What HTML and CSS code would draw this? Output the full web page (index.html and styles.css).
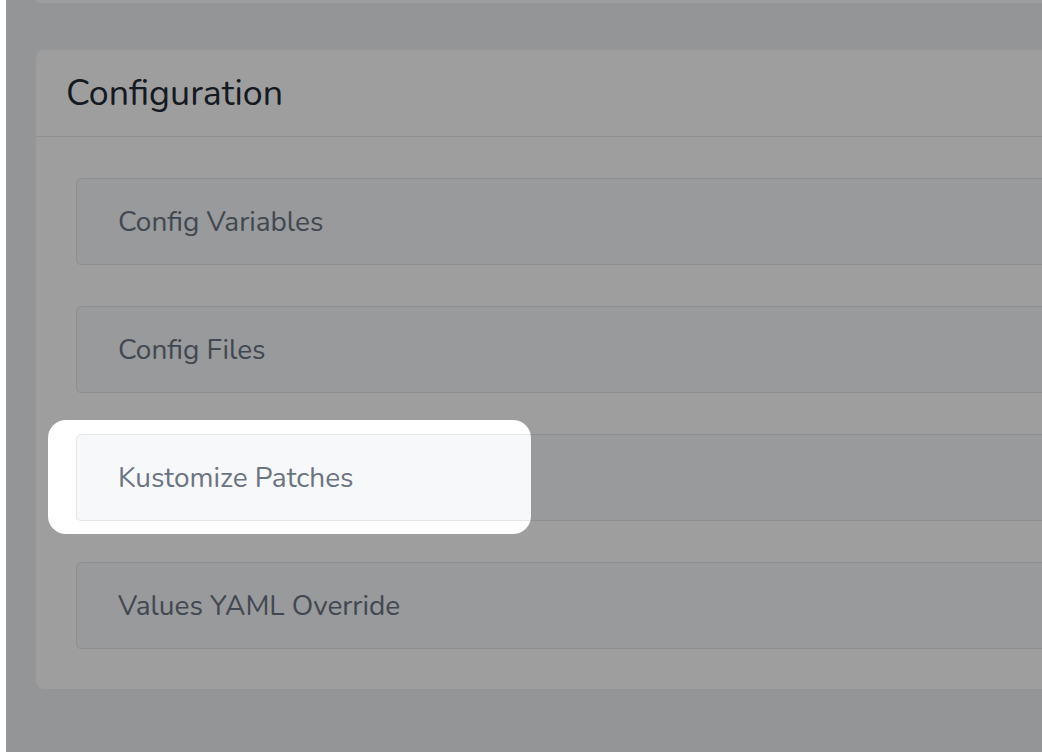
FILE: index.html
```html
<!DOCTYPE html>
<html lang="en">
<head>
<meta charset="utf-8">
<title>Configuration</title>
<link rel="stylesheet" href="styles.css">
</head>
<body>
<div class="app">
  <div class="prev-card"></div>
  <section class="card">
    <header class="card-header">
      <h2 class="card-title">Configuration</h2>
    </header>
    <div class="card-body">
      <div class="item"><span class="item-label">Config Variables</span></div>
      <div class="item"><span class="item-label">Config Files</span></div>
      <div class="item item-focus">
        <span class="item-label">Kustomize Patches</span>
        <div class="spotlight"></div>
      </div>
      <div class="item"><span class="item-label">Values YAML Override</span></div>
    </div>
  </section>
</div>
</body>
</html>
```
FILE: styles.css
```css
html, body {
  margin: 0;
  padding: 0;
  background: #ffffff;
  overflow: hidden;
}

body {
  font-family: "Nunito", "Lato", "Open Sans", sans-serif;
}

.app {
  position: relative;
  margin-left: 6px;
  min-height: 100vh;
  height: 752px;
  overflow: hidden;
  background: #eef0f4;
  padding-left: 30px;
  box-sizing: border-box;
}

.prev-card {
  width: 1100px;
  height: 3px;
  background: #ffffff;
  border-radius: 0 0 8px 8px;
  margin-bottom: 47px;
}

.card {
  width: 1100px;
  background: #ffffff;
  border-radius: 8px;
}

.card-header {
  height: 87px;
  display: flex;
  align-items: center;
  padding-left: 30px;
  border-bottom: 1px solid #e7e9ed;
  box-sizing: border-box;
}

.card-title {
  margin: 0;
  font-size: 35.8px;
  font-weight: 400;
  color: #232a36;
}

.card-body {
  padding: 41px 0 40px 40px;
  display: flex;
  flex-direction: column;
  gap: 41px;
}

.item {
  position: relative;
  height: 87px;
  box-sizing: border-box;
  border: 1px solid #e3e6ea;
  border-radius: 5px;
  background: #f7f8fa;
  display: flex;
  align-items: center;
  padding-left: 41px;
}

.item-label {
  font-size: 28px;
  color: #6b7483;
}

.spotlight {
  position: absolute;
  left: -29px;
  top: -15px;
  width: 483px;
  height: 114px;
  border-radius: 18px;
  box-shadow: 0 0 0 3000px rgba(0, 0, 0, 0.38);
  z-index: 10;
  pointer-events: none;
}
```
